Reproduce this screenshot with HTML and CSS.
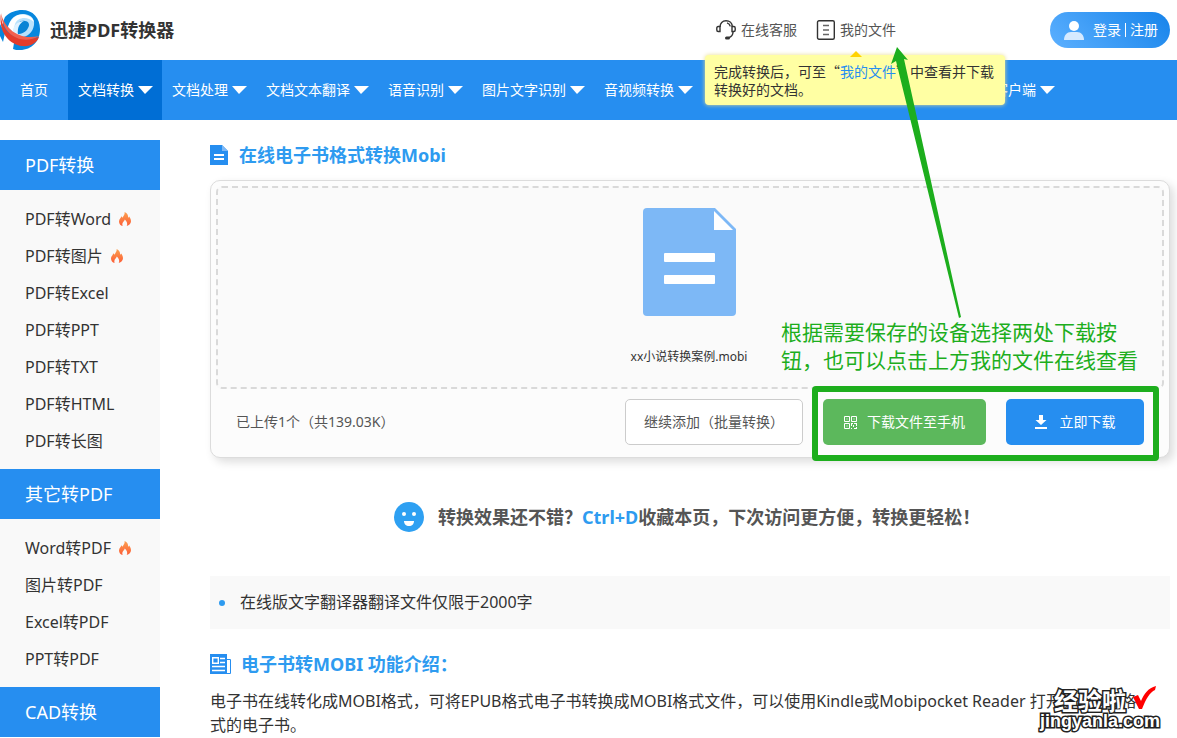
FILE: index.html
```html
<!DOCTYPE html>
<html lang="zh-CN">
<head>
<meta charset="utf-8">
<title>迅捷PDF转换器</title>
<link rel="stylesheet" href="styles.css">
</head>
<body>
<svg class="defs" width="0" height="0" aria-hidden="true">
  <defs>
    <linearGradient id="flame" x1="0" y1="0" x2="0" y2="1"><stop offset="0" stop-color="#fba04f"/><stop offset="1" stop-color="#fd5e37"/></linearGradient>
    <symbol id="fire" viewBox="0 0 12 14"><path fill="url(#flame)" d="M5.6 0C6 2.2 4.7 3.3 4.2 4.6 3.7 5.5 3.6 5.9 3.3 5.5 3 5 2.9 4.7 2.5 4.3 2.3 5.6 0 7 0 9.4 0 11.6 1.4 13.4 3.6 14 3 12.2 3.4 10.7 4.6 9.6 5.2 9 5.6 8.300 5.800 7.600 6.600 8.600 8.200 10 8.200 12 8.200 12.800 8 13.500 7.700 14 10.200 13.300 12 11.500 12 9.200 12 7.200 10.900 5.800 10.200 4.600 9.900 5.200 9.700 5.600 9.200 5.800 9.300 3.400 8.200 1 5.600 0Z"/></symbol>
  </defs>
</svg>
<header class="header">
  <a class="brand" href="#">
    <svg width="40" height="40" viewBox="0 0 40 40" aria-hidden="true">
      <path fill="#0787de" d="M5 7C10 2 16 0 22 0c11 0 18 8 18 19 0 12-8 21-20 21-3 0-5 0-7-1l1-6C4 27 0 16 5 7ZM0 14l5 9-2 9-3-6Z"/>
      <path fill="#b9e2fc" d="M8 17C10 9 15 4 23 4c8 0 12 5 11 11-1 8-8 13-14 12L14 24Z"/>
      <path fill="#fff" d="M8 17C11 8 17 3 26 5 30 6 33 8 34 12 27 6 18 7 15 14L13 22Z"/>
      <path fill="#0884d5" d="M17 16c1-4 4-6 8-5 4 0 5 4 3 7-2 4-6 6-11 6Z"/>
      <path fill="#dff2ff" d="M13 22c0-6 4-11 11-11-4 2-7 6-6 14Z"/>
      <path fill="#e33c2b" d="M1 3c-1 16 13 32 38 24-2 6-9 10-17 9C9 34-2 22 1 3Z"/>
      <path fill="#f4604d" d="M1 3c3 15 18 28 38 23C22 36 2 25 1 3Z"/>
    </svg>
    <span>迅捷PDF转换器</span>
  </a>
  <div class="tools">
    <a class="tool" href="#">
      <svg width="20" height="20" viewBox="0 0 20 20" fill="none" stroke="#333" stroke-width="1.400" aria-hidden="true"><path d="M4 7C4 3 6.500.8 10 .8S16.300 3 16.300 6.800"/><path d="M4 6.500H2.200Q.8 6.500.8 8v2q0 1.500 1.400 1.500H4ZM16 6.500h1.800q1.400 0 1.400 1.500v2q0 1.500-1.400 1.500H16ZM17 12c0 3-2 5-4.500 5.700M11 2.800c2 .6 2.900 1.800 3.300 3.600"/><path d="M10.500 18h2" stroke-width="3" stroke-linecap="round"/></svg>
      <span>在线客服</span>
    </a>
    <a class="tool" href="#">
      <svg width="19" height="20" viewBox="0 0 19 20" fill="none" stroke="#333" stroke-width="1.400" aria-hidden="true"><rect x="1.500" y=".7" width="16.800" height="18.600" rx="1.500"/><path stroke="#666" d="M7 5.500h6M7 10h6M7 14.500h6"/></svg>
      <span>我的文件</span>
    </a>
  </div>
  <a class="login" href="#">
    <svg width="20" height="19" viewBox="0 0 20 19" aria-hidden="true"><circle cx="10" cy="5" r="5" fill="#fff"/><path fill="#d6eaff" d="M0 19c0-5 3-8 7-8h6c4 0 7 3 7 8Z"/></svg>
    <span>登录</span><i class="bar"></i><span>注册</span>
  </a>
  <div class="tip" role="tooltip">完成转换后，可至“<a href="#">我的文件</a>”中查看并下载转换好的文档。</div>
</header>
<nav class="nav">
  <a class="home" href="#">首页</a>
  <a class="more current" href="#">文档转换</a>
  <a class="more" href="#">文档处理</a>
  <a class="more" href="#">文档文本翻译</a>
  <a class="more" href="#">语音识别</a>
  <a class="more" href="#">图片文字识别</a>
  <a class="more" href="#">音视频转换</a>
  <a class="more client" href="#">客户端</a>
</nav>
<div class="page">
  <aside class="side">
    <h2>PDF转换</h2>
    <ul>
      <li><a href="#">PDF转Word</a><svg class="fire"><use href="#fire"/></svg></li>
      <li><a href="#">PDF转图片</a><svg class="fire"><use href="#fire"/></svg></li>
      <li><a href="#">PDF转Excel</a></li>
      <li><a href="#">PDF转PPT</a></li>
      <li><a href="#">PDF转TXT</a></li>
      <li><a href="#">PDF转HTML</a></li>
      <li><a href="#">PDF转长图</a></li>
    </ul>
    <h2>其它转PDF</h2>
    <ul>
      <li><a href="#">Word转PDF</a><svg class="fire"><use href="#fire"/></svg></li>
      <li><a href="#">图片转PDF</a></li>
      <li><a href="#">Excel转PDF</a></li>
      <li><a href="#">PPT转PDF</a></li>
    </ul>
    <h2>CAD转换</h2>
  </aside>
  <main class="main">
    <h1 class="title">
      <svg width="18" height="20" viewBox="0 0 18 20" aria-hidden="true"><path fill="#268ef0" d="M0 0h12l6 6v14H0Z"/><path fill="#7db8f6" d="M12 0l6 6h-6Z"/><path fill="#fff" d="M4 9h10v2H4zM4 13h10v2H4z"/></svg>
      <span>在线电子书格式转换Mobi</span>
    </h1>
    <section class="panel">
      <div class="drop">
        <svg width="93" height="108" viewBox="0 0 93 108" aria-hidden="true"><path fill="#7db8f6" d="M4 0h68l21 21v83q0 4-4 4H4q-4 0-4-4V4q0-4 4-4Z"/><path fill="#fff" d="M71 3l19 19H71Z"/><rect x="21" y="45" width="51" height="9" rx="1" fill="#fff"/><rect x="21" y="67" width="51" height="9" rx="1" fill="#fff"/></svg>
        <span class="file">xx小说转换案例.mobi</span>
        <p class="note">根据需要保存的设备选择两处下载按钮，也可以点击上方我的文件在线查看</p>
      </div>
      <div class="actions">
        <span class="count">已上传1个（共139.03K）</span>
        <button class="btn add" type="button">继续添加（批量转换）</button>
        <div class="downloads">
          <button class="btn phone" type="button">
            <svg width="13" height="13" viewBox="0 0 13 13" fill="none" stroke="#fff" aria-hidden="true"><path d="M.5.5h5v5h-5zM7.500.5h5v5h-5zM.5 7.500h5v5h-5zM2.500 3h1M9.500 3h1M2.500 10h1M7.500 7v3M7 7.500h2M10 7.500h3M12.500 7v3M9.500 9v2M7 12.500h1M10 12.500h3M12.500 11v2"/></svg>
            <span>下载文件至手机</span>
          </button>
          <button class="btn now" type="button">
            <svg width="12" height="14" viewBox="0 0 12 14" fill="#fff" aria-hidden="true"><path d="M4 0h4v5h3.500L6 10 .5 5H4ZM0 12h12v2H0Z"/></svg>
            <span>立即下载</span>
          </button>
        </div>
      </div>
    </section>
    <p class="praise">
      <svg width="30" height="30" viewBox="0 0 30 30" aria-hidden="true"><circle cx="15" cy="15" r="15" fill="#2ea0f2"/><circle cx="10" cy="12" r="2" fill="#fff"/><circle cx="20" cy="12" r="2" fill="#fff"/><path fill="#fff" d="M10 19h10c0 3-2 5-5 5s-5-2-5-5Z"/></svg>
      <span>转换效果还不错？<b>Ctrl+D</b>收藏本页，下次访问更方便，转换更轻松！</span>
    </p>
    <ul class="limits"><li>在线版文字翻译器翻译文件仅限于2000字</li></ul>
    <h2 class="title intro">
      <svg width="21" height="20" viewBox="0 0 21 20" aria-hidden="true"><path fill="#268ef0" d="M0 0h17v20H0Z"/><path fill="none" stroke="#268ef0" d="M17 5.500h3.500v14H17"/><path fill="none" stroke="#fff" stroke-width="1.400" d="M2.700 3.700h5.600v5.600H2.700zM10 4.500h5M10 8.500h5M2 12.500h13M2 16.500h13"/></svg>
      <span>电子书转MOBI 功能介绍：</span>
    </h2>
    <p class="text">电子书在线转化成MOBI格式，可将EPUB格式电子书转换成MOBI格式文件，可以使用Kindle或Mobipocket Reader 打开，MOBI格式的电子书。</p>
  </main>
</div>
<svg class="arrow" width="72" height="272" viewBox="0 0 72 272" aria-hidden="true"><path fill="#1dae1d" d="M7 0 18 13 14 12 71 270 69 271 6 14 1 17Z"/></svg>
<div class="mark">
  <span class="mark-name">经验啦</span>
  <span class="mark-site">jingyanla.com</span>
  <svg width="24" height="24" viewBox="0 0 24 24" aria-hidden="true"><path fill="#f00" d="M0 11 5 9 8 15C11 8 15 2 23 0L22 4C17 6 13 13 9 23L6 23Z"/></svg>
</div>
</body>
</html>
```
FILE: styles.css
```css
* { box-sizing: border-box; }
body { margin: 0; position: relative; background: #fff; color: #333; font: 14px/20px "Noto Sans", "Noto Sans CJK SC", sans-serif; }
a { color: inherit; text-decoration: none; }
h1, h2, p, ul { margin: 0; padding: 0; }
ul { list-style: none; }
.defs { position: absolute; }

.header { position: relative; height: 60px; display: flex; align-items: center; padding-right: 7px; }
.brand { display: flex; align-items: center; gap: 10px; width: 716px; font-size: 18px; font-weight: 700; }
.tools { display: flex; gap: 19px; color: #555; }
.tool { display: flex; align-items: center; gap: 5px; }
.login { margin-left: auto; width: 120px; height: 36px; border-radius: 18px; display: flex; align-items: center; padding-left: 14px; color: #fff; background: linear-gradient(45deg, #5cb0ff, #1683ea); }
.login svg { margin-right: 9px; }
.bar { width: 1px; height: 14px; margin: 0 4px; background: #fff; }
.tip { position: absolute; z-index: 2; left: 705px; top: 55px; width: 300px; padding: 7px 9px; border-radius: 4px; background: #ffffa3; font-family: "Noto Sans CJK SC", sans-serif; line-height: 18px; box-shadow: 0 0 4px #e8dc90; }
.tip::before { content: ""; position: absolute; left: 145px; top: -4px; border: 6px solid transparent; border-top: 0; border-bottom-color: #ffd200; }
.tip a { color: #268ef0; }

.nav { display: flex; height: 60px; background: #268ef0; color: #fff; line-height: 60px; }
.nav a { padding: 0 10px; white-space: nowrap; }
.nav .home { padding: 0 20px; }
.nav .more { display: flex; align-items: center; gap: 4px; padding-right: 9px; }
.more::after { content: ""; border: 8px solid transparent; border-bottom: 0; border-top-color: #fff; border-left-width: 7px; }
.nav .current { background: #006ed5; }
.nav .client { margin-left: 282px; }

.page { display: flex; gap: 50px; padding: 20px 7px 0 0; }
.side { flex: 0 0 160px; background: #f9f9f9; font-size: 16px; }
.side h2 { height: 50px; padding-left: 25px; background: #268ef0; color: #fff; font-size: 18px; font-weight: 400; line-height: 50px; }
.side ul { padding: 10px 0; }
.side li { display: flex; align-items: center; gap: 8px; height: 37px; padding-left: 25px; }
.fire { width: 12px; height: 14px; }

.main { flex: 1; min-width: 0; }
.title { display: flex; align-items: center; gap: 11px; height: 30px; color: #2e9bf0; font-size: 18px; font-weight: 700; }
.panel { margin-top: 10px; padding: 5px; border: 1px solid #dcdcdc; border-radius: 10px; background: #fcfcfc; box-shadow: 4px 4px 10px #ddd; }
.drop { position: relative; display: flex; flex-direction: column; align-items: center; height: 203px; padding: 20px 2px 0 0; border: 2px dashed #d9d9d9; border-radius: 6px; background: #fafafa; }
.file { margin-top: 31px; font-size: 12px; }
.note { position: absolute; right: 13px; top: 130px; width: 368px; color: #1dae1d; font-size: 21px; line-height: 28px; }
.actions { display: flex; align-items: center; padding: 10px 20px 7px; color: #555; }
.btn { height: 46px; border: 0; border-radius: 5px; font: inherit; color: #fff; white-space: nowrap; display: flex; align-items: center; justify-content: center; }
.add { width: 178px; margin: 0 20px 0 auto; border: 1px solid #ccc; background: #fff; color: #555; }
.downloads { position: relative; display: flex; gap: 20px; }
.downloads::after { content: ""; position: absolute; inset: -13px -15px -16px -11px; border: 6px solid #1dae1d; border-radius: 4px; pointer-events: none; }
.phone { width: 163px; gap: 10px; background: #5cb85c; }
.now { width: 138px; gap: 13px; background: #268ef0; }

.praise { display: flex; align-items: center; gap: 14px; margin-top: 44px; padding-left: 184px; color: #555; font-size: 18px; font-weight: 700; }
.praise b { color: #2e9bf0; font-weight: 700; }
.limits { margin-top: 44px; padding: 14px 0 14px 9px; background: #f9f9f9; font-size: 16px; line-height: 25px; }
.limits li { display: flex; align-items: center; gap: 15px; }
.limits li::before { content: ""; width: 6px; height: 6px; border-radius: 50%; background: #2e9bf0; }
.intro { margin-top: 20px; gap: 10px; }
.text { margin-top: 10px; padding-right: 20px; font-size: 16px; line-height: 24px; }

.arrow { position: absolute; z-index: 3; left: 890px; top: 47px; }
.mark { position: absolute; z-index: 3; right: 14px; top: 686px; width: 126px; height: 48px; color: #fff; font-weight: 700; -webkit-text-stroke: 3px #222; paint-order: stroke fill; }
.mark-name { position: absolute; left: 17px; top: 3px; font-size: 24px; line-height: 24px; white-space: nowrap; }
.mark-site { position: absolute; left: 3px; top: 25px; font-family: "Liberation Sans", sans-serif; font-size: 18px; line-height: 20px; }
.mark svg { position: absolute; right: 6px; top: 0; }
```
